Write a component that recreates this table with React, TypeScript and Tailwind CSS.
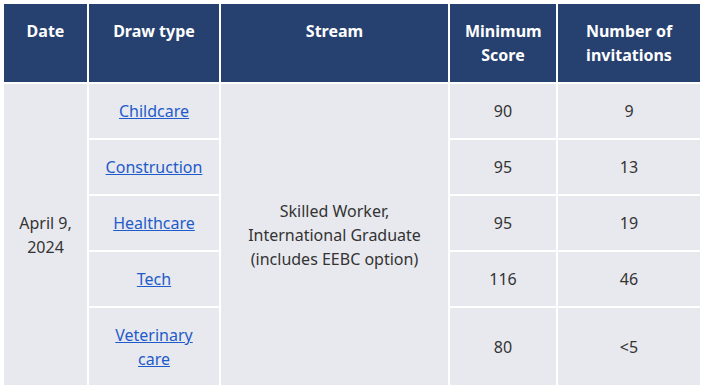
import React from "react";

const rows = [
  { type: "Childcare", min: "90", inv: "9" },
  { type: "Construction", min: "95", inv: "13" },
  { type: "Healthcare", min: "95", inv: "19" },
  { type: "Tech", min: "116", inv: "46" },
  { type: "Veterinary care", min: "80", inv: "<5" },
];

export default function App() {
  const th =
    "bg-[#26416f] text-white font-bold text-[16px] leading-6 text-center px-[15px] pt-[15px] pb-[15px]";
  const td =
    "bg-[#e8e9ee] text-[#333333] text-[16px] leading-6 text-center px-[15px] py-[15px] flex items-center justify-center";
  return (
    <div
      className="w-[705px] h-[385px] overflow-hidden bg-white p-[4px]"
      style={{ fontFamily: '"Noto Sans", "Open Sans", sans-serif' }}
    >
      <div className="grid grid-cols-[83px_130px_227px_106px_142px] gap-[2px]">
        <div className={th}>Date</div>
        <div className={th}>Draw type</div>
        <div className={th}>Stream</div>
        <div className={th}>Minimum Score</div>
        <div className={th}>Number of invitations</div>

        <div className={`${td} row-start-2 row-span-5 col-start-1`}>April 9, 2024</div>
        <div className={`${td} row-start-2 row-span-5 col-start-3`}>
          Skilled Worker, International Graduate (includes EEBC option)
        </div>
        {rows.map((r, i) => (
          <React.Fragment key={r.type}>
            <div className={td} style={{ gridRow: i + 2, gridColumn: 2 }}>
              <a href="#" className="text-[#1f5bc9] underline">
                {r.type}
              </a>
            </div>
            <div className={td} style={{ gridRow: i + 2, gridColumn: 4 }}>
              {r.min}
            </div>
            <div className={td} style={{ gridRow: i + 2, gridColumn: 5 }}>
              {r.inv}
            </div>
          </React.Fragment>
        ))}
      </div>
    </div>
  );
}
